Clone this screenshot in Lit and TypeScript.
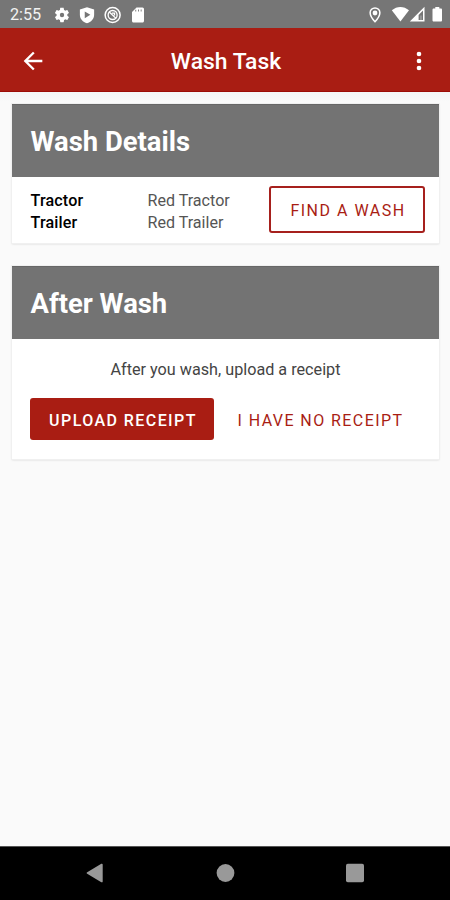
import { LitElement, html, css, svg } from "lit";
import { customElement, property } from "lit/decorators.js";

@customElement("wash-card")
class WashCard extends LitElement {
  @property() heading = "";

  static styles = css`
    :host {
      display: flex;
      flex-direction: column;
      background: #fff;
      box-shadow: 0 0 0 1px #f0f0f0, 0 1px 2px rgba(0, 0, 0, 0.16);
    }
    .heading {
      box-sizing: border-box;
      height: 73px;
      margin: 0;
      padding: 0 18.5px;
      background: #737373;
      color: #fff;
      border-top: 1px solid #676767;
      font: 700 27.4px/74px Roboto, sans-serif;
    }
    .content {
      flex: 1;
      display: flex;
      flex-direction: column;
    }
  `;

  render() {
    return html`
      <h2 class="heading">${this.heading}</h2>
      <div class="content"><slot></slot></div>
    `;
  }
}

@customElement("app-root")
class AppRoot extends LitElement {
  static styles = css`
    :host {
      display: flex;
      flex-direction: column;
      width: 450px;
      height: 900px;
      overflow: hidden;
      background: #fafafa;
      font-family: Roboto, sans-serif;
      color: #000;
    }
    svg {
      display: block;
      flex: none;
    }
    .status {
      box-sizing: border-box;
      height: 28px;
      flex: none;
      display: flex;
      align-items: center;
      justify-content: space-between;
      padding: 1px 4px 0 10px;
      background: #767676;
      color: #fff;
      fill: #fff;
    }
    .group {
      display: flex;
      align-items: center;
    }
    .clock {
      width: 42.5px;
      padding-top: 1px;
      font-size: 16.2px;
      line-height: 26px;
      color: #f2f2f2;
    }
    .notices {
      display: flex;
      gap: 7.5px;
    }
    .pin {
      margin-right: 7px;
    }
    .signal {
      margin: 0 2px 0 -1px;
    }
    .bar {
      box-sizing: border-box;
      height: 64px;
      flex: none;
      display: grid;
      grid-template-columns: 28px 1fr 28px;
      align-items: center;
      padding: 3px 17px 0 19px;
      background: #a91d13;
      border-bottom: 1px solid #9c0d08;
      color: #fff;
      fill: #fff;
    }
    .title {
      margin: 0;
      padding-top: 2px;
      text-align: center;
      font-size: 22.9px;
      font-weight: 500;
      line-height: 30px;
    }
    .page {
      flex: 1;
      display: flex;
      flex-direction: column;
      gap: 23px;
      padding: 12px 11px 0 12px;
      background: linear-gradient(#f4f6f7, #fafafa 10px);
    }
    .details {
      height: 139px;
    }
    .after {
      height: 193px;
    }
    .detail-row {
      display: flex;
      justify-content: space-between;
      padding: 9px 14px 0 18.5px;
    }
    .facts {
      display: grid;
      grid-template-columns: 117px auto;
      margin: 4px 0 0;
      font-size: 16.1px;
      line-height: 22px;
    }
    dt {
      font-weight: 500;
      letter-spacing: 0.15px;
    }
    dd {
      margin: 0;
      color: #555;
    }
    button {
      box-sizing: border-box;
      margin: 0;
      padding: 1px 0 0 1px;
      border: 0;
      border-radius: 3px;
      background: none;
      color: #a91d13;
      font: 500 16px/20px Roboto, sans-serif;
      letter-spacing: 1.43px;
      white-space: nowrap;
    }
    .find {
      width: 156px;
      height: 47px;
      border: 2px solid #a6201d;
      padding: 2px 0 0 2px;
      font-weight: 400;
      letter-spacing: 1.5px;
    }
    .hint {
      margin: 19px 0 17px;
      text-align: center;
      font-size: 16.2px;
      line-height: 23px;
      color: #444;
    }
    .actions {
      display: flex;
      padding-left: 18px;
    }
    .upload {
      width: 184px;
      height: 42px;
      padding: 3px 0 0 2px;
      background: #a91d13;
      color: #fff;
    }
    .none {
      width: 212px;
      height: 42px;
      padding-top: 3px;
      font-weight: 400;
    }
    .nav {
      box-sizing: border-box;
      height: 54px;
      flex: none;
      display: flex;
      justify-content: space-between;
      align-items: center;
      padding: 0 85px 1px 85px;
      background: #000;
      border-top: 1px solid #555;
      fill: #999;
    }
  `;

  private icon(path: string, size = 18) {
    return html`<svg width=${size} height=${size} viewBox="0 0 24 24">${svg`<path fill-rule="evenodd" d=${path}></path>`}</svg>`;
  }

  render() {
    return html`
      <header class="status">
        <div class="group">
          <span class="clock">2:55</span>
          <div class="notices">
            ${this.icon("M19.1 12.9a7 7 0 0 0 0-1.8l2-1.6c.2-.1.2-.4.1-.6l-1.9-3.3c-.1-.2-.4-.3-.6-.2l-2.4 1a7 7 0 0 0-1.6-1l-.4-2.5c0-.2-.2-.4-.5-.4h-3.8c-.2 0-.4.2-.5.4l-.3 2.5c-.6.2-1.1.6-1.6 1l-2.4-1c-.2-.1-.5 0-.6.2L2.7 8.9c-.1.2-.1.5.1.6l2 1.6a7 7 0 0 0 0 1.8l-2 1.6c-.2.1-.2.4-.1.6l1.9 3.3c.1.2.4.3.6.2l2.4-1c.5.4 1 .7 1.600 1l.4 2.5c0 .2.2.4.5.4h3.8c.2 0 .4-.2.5-.4l.3-2.5c.6-.2 1.1-.6 1.6-1l2.4 1c.2.1.5 0 .6-.2l1.9-3.3c.1-.2.1-.5-.1-.6zM12 14.9a2.900 2.900 0 1 1 0-5.800 2.900 2.900 0 0 1 0 5.800z")}
            ${this.icon("M12 1.500 2.500 4.500v7c0 5.500 4 9.700 9.500 11.500 5.500-1.800 9.500-6 9.500-11.500v-7zM9 7.300l7.500 4.500L9 16.300z")}
            <svg width="18" height="18" viewBox="0 0 24 24" fill="none" stroke="#fff">
              <circle cx="11.500" cy="12" r="10" stroke-width="2"></circle>
              <circle cx="11.500" cy="12" r="6" stroke-width="1.800"></circle>
              <path d="M7 8 16 16.500M10.500 9.500h3.500v3" stroke-width="1.800"></path>
            </svg>
            ${this.icon("M18 2h-8L4 8v12c0 1.100.9 2 2 2h12c1.100 0 2-.9 2-2V4a2 2 0 0 0-2-2zM9.600 7.200H8.400V5h1.200zm3.600 0h-1.200V4.500h1.200zm3.600 0h-1.200V4.500h1.200z")}
          </div>
        </div>
        <div class="group">
          <svg class="pin" width="18" height="18" viewBox="0 0 24 24" fill="none" stroke="#fff" stroke-width="2">
            <path d="M12 2.500a6.500 6.500 0 0 0-6.500 6.500c0 5 6.500 12 6.500 12s6.500-7 6.500-12A6.500 6.500 0 0 0 12 2.500z"></path>
            <circle cx="12" cy="9.300" r="2.200" fill="#fff"></circle>
          </svg>
          <svg width="19" height="17" viewBox="0 0 19 17"><path d="M.8 4.300C6-.2 12.800-.2 18 4.300L9.400 15.500z"></path></svg>
          <svg class="signal" width="17" height="17" viewBox="0 0 17 17">
            <path fill-rule="evenodd" d="M15.500.8V15.500H.8zM14 4.500 9.600 8.900V14H14z"></path>
            <path d="M11.300 9.400h1.300V14h-1.300z" opacity=".35"></path>
          </svg>
          <svg width="18" height="17" viewBox="0 0 18 17"><path d="M7.300 1h4v1.500h1.500c.8 0 1.200.4 1.200 1.200v10.500c0 .8-.4 1.300-1.200 1.300h-7c-.8 0-1.300-.5-1.300-1.300V3.700c0-.8.5-1.200 1.300-1.200h1.500z"></path></svg>
        </div>
      </header>

      <div class="bar">
        ${this.icon("M20 11H7.830l5.590-5.590L12 4l-8 8 8 8 1.410-1.410L7.830 13H20z", 28)}
        <h1 class="title">Wash Task</h1>
        ${this.icon("M12 8a2 2 0 1 0 0-4 2 2 0 0 0 0 4zm0 2a2 2 0 1 0 0 4 2 2 0 0 0 0-4zm0 6a2 2 0 1 0 0 4 2 2 0 0 0 0-4z", 28)}
      </div>

      <main class="page">
        <wash-card class="details" heading="Wash Details">
          <div class="detail-row">
            <dl class="facts">
              <dt>Tractor</dt><dd>Red Tractor</dd>
              <dt>Trailer</dt><dd>Red Trailer</dd>
            </dl>
            <button class="find">FIND A WASH</button>
          </div>
        </wash-card>
        <wash-card class="after" heading="After Wash">
          <p class="hint">After you wash, upload a receipt</p>
          <div class="actions">
            <button class="upload">UPLOAD RECEIPT</button>
            <button class="none">I HAVE NO RECEIPT</button>
          </div>
        </wash-card>
      </main>

      <nav class="nav">
        <svg width="20" height="20" viewBox="0 0 20 20"><path d="M16.300.8c.8-.4 1.400 0 1.400.8v16.800c0 .8-.6 1.200-1.400.8L2.200 10.800c-.7-.4-.7-1.200 0-1.600z"></path></svg>
        <svg width="20" height="20" viewBox="0 0 20 20"><circle cx="10.500" cy="10" r="8.900"></circle></svg>
        <svg width="20" height="20" viewBox="0 0 20 20"><rect x="1" y=".8" width="18" height="18.500" rx="1.800"></rect></svg>
      </nav>
    `;
  }
}
